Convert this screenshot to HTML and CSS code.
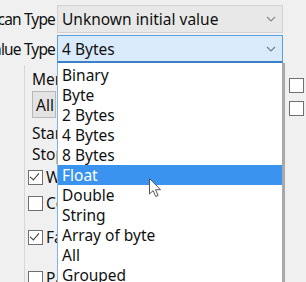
FILE: index.html
```html
<!DOCTYPE html>
<html lang="en">

<head>
    <meta charset="UTF-8">
    <title>Value Type</title>
    <link rel="stylesheet" href="styles.css">
</head>

<body>
    <div class="form">
        <div class="field">
            <div class="label"><span>Scan Type</span></div>
            <div class="combo">
                <span>Unknown initial value</span>
                <svg class="chev" width="10" height="6" viewBox="0 0 10 6"><path d="M1 1l4 4 4-4" fill="none" stroke="#8a8a8a" stroke-width="1.2"/></svg>
            </div>
        </div>
        <div class="field">
            <div class="label"><span>Value Type</span></div>
            <div class="combo open">
                <span>4 Bytes</span>
                <svg class="chev" width="10" height="6" viewBox="0 0 10 6"><path d="M1 1l4 4 4-4" fill="none" stroke="#6f8090" stroke-width="1.2"/></svg>
            </div>
        </div>

        <div class="lower">
            <div class="group">
                <div class="legend">Memory Scan Options</div>
                <button class="btn">All</button>
                <div class="line start">Start</div>
                <div class="line">Stop</div>
                <label class="check first"><i class="box on"></i>Writable</label>
                <label class="check"><i class="box"></i>CopyOnWrite</label>
                <label class="check gap"><i class="box on"></i>Fast Scan</label>
                <label class="check gap2"><i class="box"></i>Pause the game</label>
            </div>
            <div class="side">
                <i class="box"></i>
                <i class="box"></i>
            </div>
        </div>

        <ul class="dropdown">
            <li>Binary</li>
            <li>Byte</li>
            <li>2 Bytes</li>
            <li>4 Bytes</li>
            <li>8 Bytes</li>
            <li class="sel">Float</li>
            <li>Double</li>
            <li>String</li>
            <li>Array of byte</li>
            <li>All</li>
            <li>Grouped</li>
        </ul>

        <svg class="cursor" width="13" height="20" viewBox="0 0 13 20"><path d="M0.5 0.5v15.5l3.6-3.4 2.6 5.9 2.4-1.1-2.6-5.7h5z" fill="#fff" stroke="#555" stroke-width="1"/></svg>
    </div>
</body>

</html>
```

FILE: styles.css
```css
* {
    padding: 0;
    margin: 0;
    list-style: none;
    box-sizing: border-box;
}

body {
    width: 306px;
    height: 282px;
    overflow: hidden;
    background: #f0f0f0;
    font-family: "Noto Sans", "Open Sans", sans-serif;
    font-size: 15.5px;
    color: #111;
}

.form {
    position: relative;
    padding-top: 5px;
    height: 100%;
}

.field {
    display: flex;
    align-items: center;
    height: 28px;
    margin-bottom: 2px;
}

/* label is cut on the left, text sticks to the combo */
.label {
    width: 57px;
    display: flex;
    justify-content: flex-end;
    overflow: hidden;
    white-space: nowrap;
    padding-right: 2px;
    letter-spacing: -0.85px;
}

.combo {
    width: 226px;
    height: 28px;
    display: flex;
    align-items: center;
    justify-content: space-between;
    padding: 0 6px 0 4px;
    background: #e8e8e8;
    border: 1px solid #d2d2d2;
}

.combo.open {
    background: #d9ebfa;
    border: 1px solid #5aa0e0;
    border-bottom: 2px solid #3b7fc4;
}

.lower {
    display: flex;
    padding-left: 24px;
}

/* only the left strip shows, the rest is under the list */
.group {
    width: 33px;
    overflow: hidden;
    border-left: 1px solid #d6d6d6;
    padding-left: 7px;
    white-space: nowrap;
    height: 230px;
}

.legend {
    height: 22px;
    line-height: 22px;
    margin-top: 3px;
}

.btn {
    display: block;
    width: 24px;
    height: 27px;
    margin-top: 1px;
    border: 1px solid #b8b8b8;
    background: #e3e3e3;
    font: inherit;
    color: inherit;
    text-align: left;
    padding-left: 3px;
    overflow: hidden;
}

.line {
    height: 21px;
    line-height: 21px;
}

.line.start {
    margin-top: 5px;
}

.check {
    display: flex;
    align-items: center;
    height: 20px;
    gap: 3px;
    margin-left: -4px;
    margin-top: 6px;
}

.check.first {
    margin-top: 2px;
}

.check.gap {
    margin-top: 14px;
}

.check.gap2 {
    margin-top: 21px;
}

.box {
    display: block;
    flex: none;
    width: 15px;
    height: 15px;
    border: 1.5px solid #707070;
    background: #fff;
    position: relative;
}

.box.on::after {
    content: "";
    position: absolute;
    left: 3px;
    top: 0;
    width: 4px;
    height: 8px;
    border: solid #333;
    border-width: 0 1.5px 1.5px 0;
    transform: rotate(40deg);
}

.side {
    display: flex;
    flex-direction: column;
    gap: 8px;
    padding-top: 13px;
    margin-left: 232px;
}

.dropdown {
    position: absolute;
    left: 57px;
    top: 63px;
    width: 228px;
    height: 230px;
    background: #fff;
    border-left: 1px solid #7fb2e5;
    border-right: 3px solid #a9a9a9;
    padding-top: 2px;
}

.dropdown li {
    height: 20px;
    line-height: 20px;
    padding-left: 4px;
}

.dropdown li.sel {
    background: #3a94ef;
    color: #fff;
}

.cursor {
    position: absolute;
    left: 149px;
    top: 178px;
}
```
